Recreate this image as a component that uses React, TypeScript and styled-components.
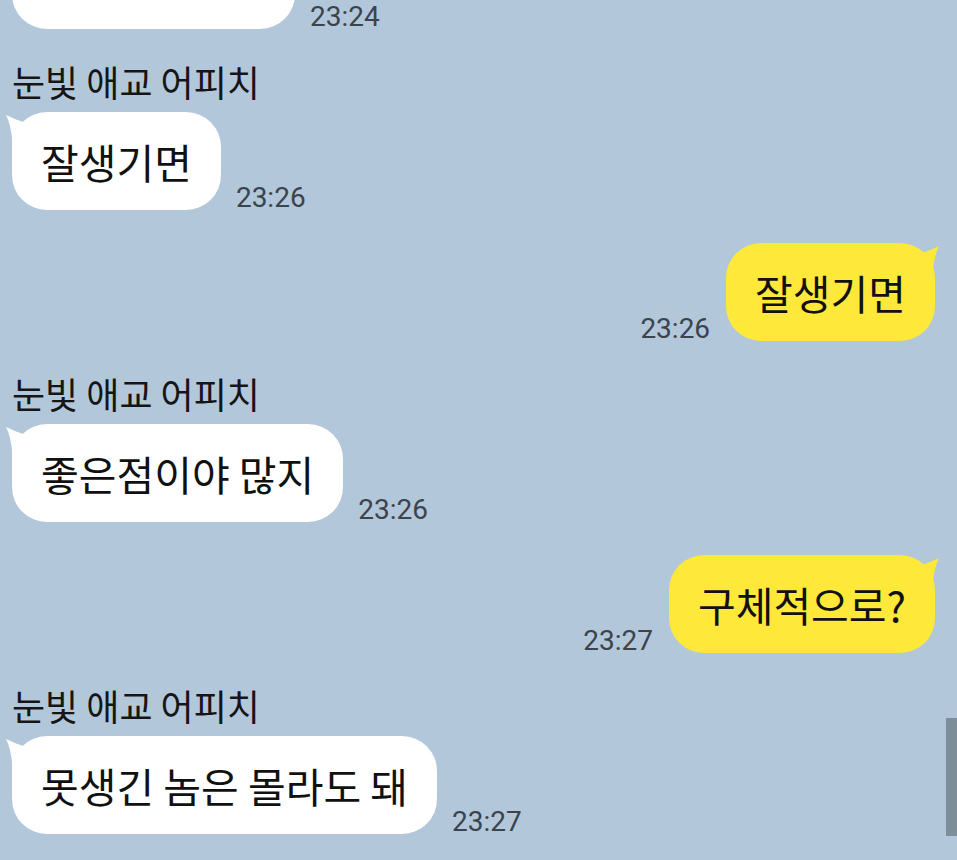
import React from "react";
import styled, { createGlobalStyle } from "styled-components";

const Global = createGlobalStyle`
  html, body {
    margin: 0;
    padding: 0;
    background: #b2c7da;
    overflow: hidden;
  }
  body {
    font-family: "Noto Sans CJK KR", "Noto Sans", sans-serif;
  }
`;

const Screen = styled.div`
  width: 957px;
  height: 860px;
  background: #b2c7da;
  overflow: hidden;
  position: relative;
`;

const Feed = styled.div`
  display: flex;
  flex-direction: column;
  padding: 0 22px 0 12px;
`;

const Group = styled.div<{ $clip?: boolean }>`
  display: flex;
  flex-direction: column;
  margin-top: ${(p) => (p.$clip ? "-69px" : "30px")};
`;

const Name = styled.div`
  font-size: 36px;
  line-height: 44px;
  color: #151515;
  margin-bottom: 9px;
`;

const Row = styled.div<{ $mine?: boolean }>`
  display: flex;
  align-items: flex-end;
  justify-content: ${(p) => (p.$mine ? "flex-end" : "flex-start")};
  gap: ${(p) => (p.$mine ? "16px" : "15px")};
  margin-top: ${(p) => (p.$mine ? "33px" : "0")};
`;

const Bubble = styled.div<{ $mine?: boolean; $width?: number }>`
  position: relative;
  box-sizing: border-box;
  height: 98px;
  ${(p) => (p.$width ? `width: ${p.$width}px;` : "")}
  padding: 22px 29px;
  border-radius: 35px;
  background: ${(p) => (p.$mine ? "#fee83a" : "#ffffff")};
  color: #111111;
  font-size: 41px;
  line-height: 54px;
  white-space: nowrap;
`;

const Tail = styled.svg<{ $mine?: boolean }>`
  position: absolute;
  top: 0;
  width: 30px;
  height: 40px;
  ${(p) => (p.$mine ? "right: -4px; transform: scaleX(-1);" : "left: -6px;")}
`;

const Time = styled.div`
  font-family: Roboto, "Liberation Sans", sans-serif;
  font-size: 28px;
  line-height: 28px;
  color: #3b434c;
  margin-bottom: -2px;
`;

const Scrollbar = styled.div`
  position: absolute;
  right: 0;
  top: 718px;
  width: 11px;
  height: 118px;
  background: #7d8d9a;
`;

type Msg =
  | { kind: "in"; name?: string; text: string; time: string; clip?: boolean; width?: number }
  | { kind: "out"; text: string; time: string };

const messages: Msg[] = [
  { kind: "in", text: "", time: "23:24", clip: true, width: 283 },
  { kind: "in", name: "눈빛 애교 어피치", text: "잘생기면", time: "23:26" },
  { kind: "out", text: "잘생기면", time: "23:26" },
  { kind: "in", name: "눈빛 애교 어피치", text: "좋은점이야 많지", time: "23:26" },
  { kind: "out", text: "구체적으로?", time: "23:27" },
  { kind: "in", name: "눈빛 애교 어피치", text: "못생긴 놈은 몰라도 돼", time: "23:27" },
];

const TailShape = ({ mine }: { mine?: boolean }) => (
  <Tail $mine={mine} viewBox="0 0 30 40">
    <path
      d="M0 3 Q9 7.5 17 10 L24 9 L24 40 L6 40 L6 26 Q4.5 12 0 3 Z"
      fill={mine ? "#fee83a" : "#ffffff"}
    />
  </Tail>
);

export default function App() {
  return (
    <Screen>
      <Global />
      <Feed>
        {messages.map((m, i) =>
          m.kind === "in" ? (
            <Group key={i} $clip={m.clip}>
              {m.name && <Name>{m.name}</Name>}
              <Row>
                <Bubble $width={m.width}>
                  {!m.clip && <TailShape />}
                  {m.text}
                </Bubble>
                <Time>{m.time}</Time>
              </Row>
            </Group>
          ) : (
            <Row key={i} $mine>
              <Time>{m.time}</Time>
              <Bubble $mine>
                <TailShape mine />
                {m.text}
              </Bubble>
            </Row>
          )
        )}
      </Feed>
      <Scrollbar />
    </Screen>
  );
}
